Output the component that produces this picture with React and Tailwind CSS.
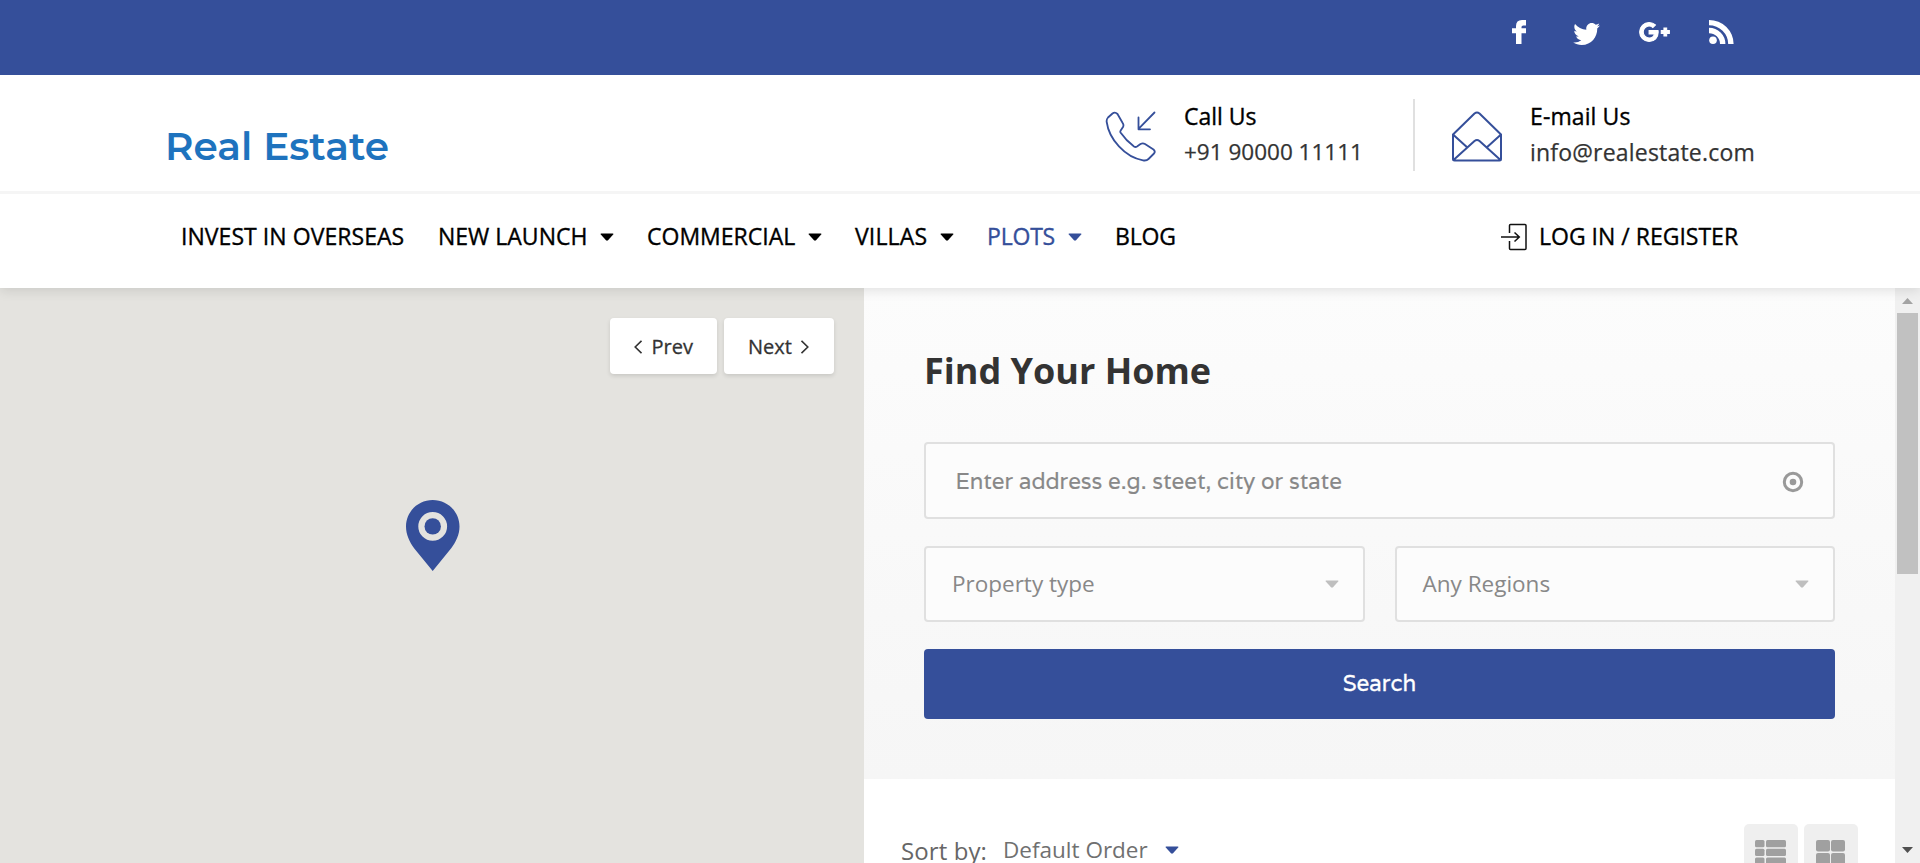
import React from "react";

function Caret({ className = "" }) {
  return (
    <svg className={`h-[8px] w-[14px] shrink-0 ${className}`} viewBox="0 0 14 8" fill="currentColor">
      <path d="M1.2 0.4H12.8Q14 0.6 13.2 1.6L8 7.2Q7 8.1 6 7.2L0.8 1.6Q0 0.6 1.2 0.4Z" />
    </svg>
  );
}

function Social() {
  return (
    <div className="flex h-[75px] bg-[#354f9a] pl-[1512px] pt-[20px] text-white">
      <svg className="h-[24px] w-[14px]" viewBox="0 0 14 24" fill="currentColor">
        <path d="M14 0V5.5H11.2Q9.5 5.5 9.5 7V8.2H14V13.3H9.5V24H4V13.3H0V8.2H4V6Q4 0 10 0Z" />
      </svg>
      <svg className="ml-[47px] mt-[3px] h-[22px] w-[27px]" viewBox="1.4 4 21.1 17" preserveAspectRatio="none" fill="currentColor">
        <path d="M22.46 6c-.77.35-1.6.58-2.46.69.88-.53 1.56-1.37 1.88-2.38-.83.5-1.75.85-2.72 1.05C18.37 4.5 17.26 4 16 4c-2.35 0-4.27 1.92-4.27 4.29 0 .34.04.67.11.98C8.28 9.09 5.11 7.38 3 4.79c-.37.63-.58 1.37-.58 2.15 0 1.49.75 2.81 1.91 3.56-.71 0-1.37-.2-1.95-.5v.03c0 2.08 1.48 3.82 3.44 4.21a4.22 4.22 0 0 1-1.93.07 4.28 4.28 0 0 0 4 2.98 8.521 8.521 0 0 1-5.33 1.84c-.34 0-.68-.02-1.02-.06C3.44 20.29 5.7 21 8.12 21 16 21 20.33 14.46 20.33 8.79c0-.19 0-.37-.01-.56.84-.6 1.56-1.36 2.14-2.23Z" />
      </svg>
      <svg className="ml-[39px] mt-[2px] h-[20px] w-[31px]" viewBox="0.6 4.6 22.8 14.8" fill="currentColor" stroke="currentColor" strokeWidth="0.8">
        <path d="M23 11h-2V9h-2v2h-2v2h2v2h2v-2h2zM8 11v2.4h3.97c-.16 1.03-1.2 3.02-3.97 3.02-2.39 0-4.34-1.98-4.34-4.42S5.61 7.58 8 7.58c1.36 0 2.27.58 2.79 1.08l1.9-1.83C11.47 5.69 9.89 5 8 5c-3.87 0-7 3.13-7 7s3.13 7 7 7c4.04 0 6.72-2.84 6.72-6.84 0-.46-.05-.81-.11-1.16H8Z" />
      </svg>
      <svg className="ml-[39px] h-[24px] w-[25px]" viewBox="0 0 25 24" fill="currentColor">
        <circle cx="4" cy="20.2" r="3.8" />
        <path d="M0 7.8A16.4 16.2 0 0 1 16.4 24H11A11 10.8 0 0 0 0 13.2Z" />
        <path d="M0 0A24.6 24 0 0 1 24.6 24H19.2A19.2 18.8 0 0 0 0 5.2Z" />
      </svg>
    </div>
  );
}

function Header() {
  return (
    <div className="flex h-[119px] border-b-[3px] border-[#f5f5f5] pl-[165px]">
      <div className="w-[940px] pt-[45px] font-['Montserrat','Inter',sans-serif] text-[39px] font-semibold leading-[52px] tracking-[0.06px] text-[#1e73be]">
        Real Estate
      </div>
      <svg className="mt-[36px] h-[52px] w-[52px]" viewBox="0 0 52 52" fill="none" stroke="#354f9a" strokeWidth="1.8" strokeLinejoin="round" strokeLinecap="round">
        <path d="M7.5 2.5 3 6.5Q1.3 8.3 1.7 11C4 28 20 46.500 38 49.300Q41.500 50 43.500 48L49 42.500Q50.700 40.500 48.500 38.500L40 33Q37.800 31.700 35.500 33L32 35.500Q30.500 36.500 29 35.500Q21 29.500 15.500 21.500Q15 20.500 15.700 19.500L18 16Q19 14 17.800 12.200L12.500 3Q10 .5 7.500 2.500Z" />
        <path d="M49.500 1.500 33.500 17.800M33.500 6.500V18.300H45" />
      </svg>
      <div className="ml-[27px] w-[229px] pt-[23px] font-['Open_Sans',sans-serif] text-[23px] leading-[36px]">
        <div className="text-black [-webkit-text-stroke:0.35px]">Call Us</div>
        <div className="text-[22.5px] text-[#333] [-webkit-text-stroke:0.25px]">+91 90000 11111</div>
      </div>
      <div className="mt-[24px] h-[72px] w-[2px] bg-[#e0e0e0]" />
      <svg className="ml-[36px] mt-[36px] h-[52px] w-[52px]" viewBox="0 0 52 52" fill="none" stroke="#354f9a" strokeWidth="2" strokeLinejoin="round">
        <path d="M2 23.500 23.500 2.500Q26 .7 28.500 2.500L50 23.500V48Q50 49.500 48.500 49.500H3.500Q2 49.500 2 48ZM2 23.500 15.800 36M50 23.500 36.200 36M2.500 49 23.500 30Q26 28 28.500 30L49.500 49" />
      </svg>
      <div className="ml-[27px] pt-[23px] font-['Open_Sans',sans-serif] text-[23px] leading-[36px]">
        <div className="tracking-[0.1px] text-black [-webkit-text-stroke:0.35px]">E-mail Us</div>
        <div className="tracking-[0.2px] text-[#333] [-webkit-text-stroke:0.25px]">info@realestate.com</div>
      </div>
    </div>
  );
}

function Nav() {
  return (
    <div className="flex h-[94px] items-start whitespace-nowrap pl-[181px] pt-[24px] font-['Open_Sans',sans-serif] text-[23px] leading-[36px] text-black [-webkit-text-stroke:0.35px]">
      <div className="w-[257px] tracking-[0.05px]">INVEST IN OVERSEAS</div>
      <div className="w-[162px]">NEW LAUNCH</div>
      <Caret className="mr-[33px] mt-[15px]" />
      <div className="w-[161px]">COMMERCIAL</div>
      <Caret className="mr-[33px] mt-[15px]" />
      <div className="w-[85px] tracking-[0.15px]">VILLAS</div>
      <Caret className="mr-[33px] mt-[15px]" />
      <div className="w-[81px] tracking-[-0.2px] text-[#354f9a]">PLOTS</div>
      <Caret className="mr-[33px] mt-[15px] text-[#354f9a]" />
      <div className="w-[386px] tracking-[-0.2px]">BLOG</div>
      <svg className="mt-[5px] h-[28px] w-[26px] shrink-0" viewBox="0 0 26 28" fill="none" stroke="#111" strokeWidth="1.500">
        <path d="M8.500 10V2.500Q8.500 1.500 9.500 1.500H24Q25 1.500 25 2.500V25.500Q25 26.500 24 26.500H9.500Q8.500 26.500 8.500 25.500V18M0 14H18M13.500 9.500 18.300 14 13.500 18.500" />
      </svg>
      <div className="ml-[12px]">LOG IN / REGISTER</div>
    </div>
  );
}

function MapPane() {
  return (
    <div className="w-[864px] shrink-0 bg-[#e4e3df] pt-[30px]">
      <div className="flex gap-[7px] pl-[610px] font-['Open_Sans',sans-serif] text-[20px] text-[#333] [-webkit-text-stroke:0.3px]">
        <button className="flex h-[56px] w-[107px] items-center rounded-[4px] bg-white pl-[24px] pt-[2px] shadow-[0_2px_4px_rgba(0,0,0,0.12)]">
          <svg className="mr-[9.5px] h-[14px] w-[8px]" viewBox="0 0 8 14" fill="none" stroke="#333" strokeWidth="1.600"><path d="M7.500 .8 1.200 7 7.500 13.200" /></svg>
          Prev
        </button>
        <button className="flex h-[56px] w-[110px] items-center rounded-[4px] bg-white pl-[24px] pt-[2px] shadow-[0_2px_4px_rgba(0,0,0,0.12)]">
          Next
          <svg className="ml-[9px] h-[14px] w-[8px]" viewBox="0 0 8 14" fill="none" stroke="#333" strokeWidth="1.600"><path d="M.5 .8 6.800 7 .5 13.200" /></svg>
        </button>
      </div>
      <svg className="ml-[406px] mt-[126px] h-[71px] w-[54px]" viewBox="0 0 54 71" fill="#354f9a">
        <path fillRule="evenodd" d="M26.700 0C41.500 0 53.500 11.800 53.500 26.500C53.500 34.500 50 42 45 48.500L26.700 71 8.300 48.500C3.500 42 0 34.500 0 26.500C0 11.800 12 0 26.700 0ZM26.700 12A14.400 14.400 0 1 0 26.700 40.800A14.400 14.400 0 1 0 26.700 12Z" />
        <circle cx="26.700" cy="26.400" r="8.200" />
      </svg>
    </div>
  );
}

function Select({ label }) {
  return (
    <div className="flex h-[76px] flex-1 items-center justify-between rounded-[4px] border-2 border-[#e0e0e0] bg-[#fcfcfc] pl-[26px] pr-[24px] text-[#888]">
      <span>{label}</span>
      <Caret className="text-[#bfbfbf]" />
    </div>
  );
}

function SearchPanel() {
  return (
    <div className="h-[491px] shrink-0 bg-linear-to-b from-[#fcfcfc] to-[#f6f6f6] pl-[60px] pr-[60px] pt-[57px] font-['Open_Sans',sans-serif]">
      <h1 className="text-[36px] font-bold leading-[52px] text-[#333]">Find Your Home</h1>
      <div className="mt-[45px] flex h-[77px] items-center justify-between rounded-[4px] border-2 border-[#e0e0e0] bg-[#fcfcfc] pl-[29.5px] pr-[29px] text-[#888]">
        <span className="font-['Varela','Varela_Round','Lato',sans-serif] text-[22.3px] [-webkit-text-stroke:0.15px]">Enter address e.g. steet, city or state</span>
        <svg className="mt-[3px] h-[22px] w-[22px]" viewBox="0 0 22 22" fill="none" stroke="#999" strokeWidth="3">
          <circle cx="11" cy="11" r="8.700" />
          <circle cx="11" cy="11" r="3.300" fill="#999" stroke="none" />
        </svg>
      </div>
      <div className="mt-[27px] flex gap-[30px] text-[22.5px]">
        <Select label="Property type" />
        <Select label="Any Regions" />
      </div>
      <button className="mt-[27px] flex h-[70px] w-full items-center justify-center rounded-[4px] bg-[#354f9a] pb-[2px] font-['Varela','Varela_Round','Lato',sans-serif] text-[22.5px] text-white [-webkit-text-stroke:0.3px]">Search</button>
    </div>
  );
}

function Results() {
  return (
    <div className="flex grow bg-white pl-[37px] pt-[45px] font-['Open_Sans',sans-serif] text-[24px] leading-[36px]">
      <div className="w-[102px] pt-[9px] tracking-[0.1px] text-[#666]">Sort by:</div>
      <div className="w-[162px] pt-[8px] text-[22.5px] text-[#707070]">Default Order</div>
      <Caret className="mt-[22px] text-[#354f9a]" />
      <div className="ml-auto mr-[37px] flex gap-[6px]">
        <div className="h-[54px] w-[54px] rounded-[5px] bg-[#efefef] pl-[11px] pt-[16px]">
          <svg className="h-[26px] w-[32px]" viewBox="0 0 32 26" fill="#a0a0a0">
            {[0, 8.7, 17.4].map((y) => (
              <g key={y}>
                <rect x="0" y={y} width="9.500" height="7.200" rx="1.500" />
                <rect x="11" y={y} width="20" height="7.200" rx="1.500" />
              </g>
            ))}
          </svg>
        </div>
        <div className="h-[54px] w-[54px] rounded-[5px] bg-[#efefef] pl-[12px] pt-[16px]">
          <svg className="h-[26px] w-[30px]" viewBox="0 0 30 26" fill="#a0a0a0">
            <rect width="14" height="11.500" rx="2" />
            <rect x="15" width="14" height="11.500" rx="2" />
            <rect y="13" width="14" height="11.500" rx="2" />
            <rect x="15" y="13" width="14" height="11.500" rx="2" />
          </svg>
        </div>
      </div>
    </div>
  );
}

function Scrollbar() {
  return (
    <div className="flex w-[25px] shrink-0 flex-col items-center bg-[#f0f0f0]">
      <svg className="mt-[10px] h-[6px] w-[11px]" viewBox="0 0 11 6" fill="#a3a3a3"><path d="M0 6 5.500 0 11 6Z" /></svg>
      <div className="mt-[9px] h-[261px] w-[21px] bg-[#c1c1c1]" />
      <svg className="mb-[10px] mt-auto h-[6px] w-[11px]" viewBox="0 0 11 6" fill="#505050"><path d="M0 0 5.500 6 11 0Z" /></svg>
    </div>
  );
}

export default function App() {
  return (
    <div className="flex h-[863px] w-[1920px] flex-col overflow-hidden bg-white">
      <header className="relative z-10 shrink-0 bg-white shadow-[0_2px_12px_rgba(0,0,0,0.12)]">
        <Social />
        <Header />
        <Nav />
      </header>
      <main className="flex h-[575px]">
        <MapPane />
        <div className="flex w-[1031px] shrink-0 flex-col">
          <SearchPanel />
          <Results />
        </div>
        <Scrollbar />
      </main>
    </div>
  );
}
